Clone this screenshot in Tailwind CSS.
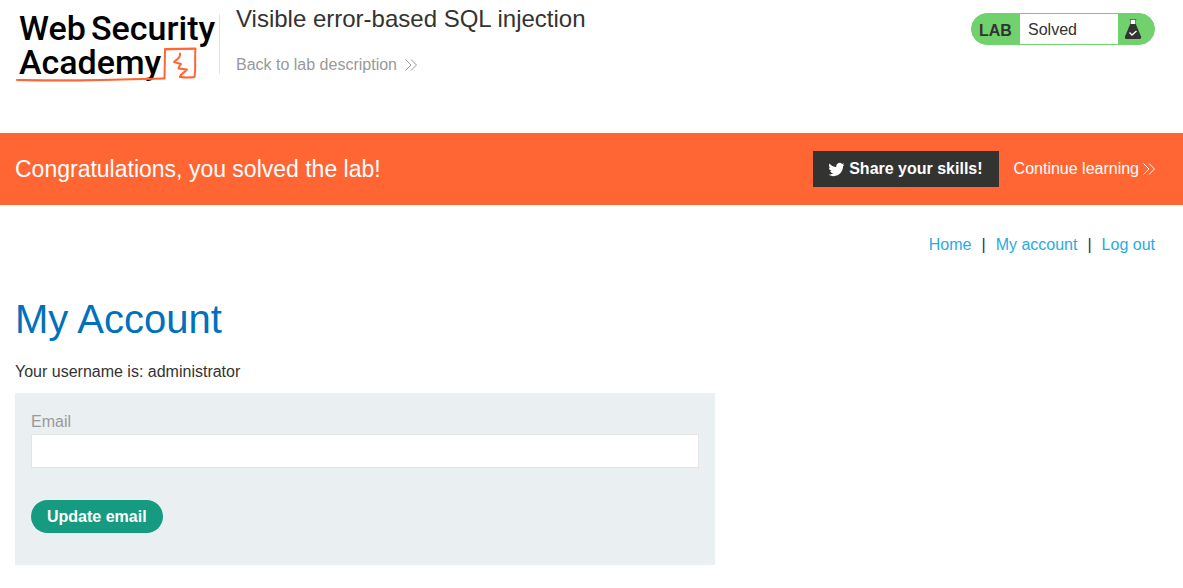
<!DOCTYPE html>
<html lang="en">
<head>
<meta charset="utf-8">
<meta name="viewport" content="width=device-width, initial-scale=1">
<title>Visible error-based SQL injection</title>
<script src="https://cdn.jsdelivr.net/npm/@tailwindcss/browser@4"></script>
</head>
<body class="bg-white font-['Liberation_Sans',Arial,sans-serif] text-base leading-6 text-[#333332]">
<header class="flex h-[133px] items-start pr-7 pl-4">
  <a href="#" aria-label="Web Security Academy" class="shrink-0 pt-3">
    <svg class="block h-[72px] w-[200px] overflow-visible" viewBox="16 12 200 72" font-family="Roboto, sans-serif" font-weight="500" font-size="34">
      <text x="19" y="40">Web</text>
      <text x="91" y="40">Security</text>
      <text x="19" y="74">Academy</text>
      <g fill="none" stroke="#ff6633" stroke-linecap="round" stroke-linejoin="round">
        <path stroke-width="2" d="M17 80Q60 81 100 80L164.500 78.500L165 49L195.500 48.500C194.500 58 196 68 194.500 77Q188 78 180 77"/>
        <path stroke-width="1" d="M17 79.500Q70 81 146 79L164 78M166 50L195 49"/>
        <path stroke-width="2" d="M180 53.500C180.500 57 178.500 58.500 174 62L181 64C179 66 179 67 178.500 68.500L187 69.500C185 72 182 73 180 76.500"/>
      </g>
    </svg>
  </a>
  <div class="mt-3.5 ml-[3px] h-15 w-px shrink-0 bg-[#e4e4e4]"></div>
  <div class="ml-4 grow pt-1">
    <h1 class="text-2xl leading-[30px]">Visible error-based SQL injection</h1>
    <a href="#" class="mt-[19px] inline-flex items-center gap-2 text-[#999999]">Back to lab description
      <svg class="h-3 w-3" viewBox="0 0 12 12" fill="none" stroke="currentColor" stroke-width="1"><path d="M.5 .5L6 6L.5 11.500M6 .5L11.500 6L6 11.500"/></svg>
    </a>
  </div>
  <div class="mt-[13px] flex h-8 w-[184px] shrink-0 overflow-hidden rounded-2xl border border-[#70d16d] bg-[#70d16d]">
    <span class="w-12 pt-[5px] pl-[7px] font-bold">LAB</span>
    <span class="grow bg-white pt-1 pl-2">Solved</span>
    <span class="flex w-9 items-start pt-1 pl-[6px]">
      <svg class="h-[22px] w-[18px]" viewBox="0 0 18 22">
        <path fill="#fff" d="M6.500 2H11.500V8H6.500z"/>
        <path fill="none" stroke="#333332" d="M5.500 1.500H12.500M6.500 1.500V7.500M11.500 1.500V7.500" stroke-width=".5"/>
        <path fill="#333332" d="M6.200 6H11.800L17 18.500Q17.500 21 15.500 21H2.500Q.5 21 1 18.500z"/>
        <path fill="none" stroke="#fff" stroke-width="1.300" d="M5.500 14.500L8 17L12.500 13"/>
      </svg>
    </span>
  </div>
</header>
<section class="flex h-18 items-center bg-[#ff6633] pr-7 pl-[15px] text-white">
  <h2 class="grow text-[23px] leading-8">Congratulations, you solved the lab!</h2>
  <button type="button" class="flex h-9 items-center gap-[5px] bg-[#333332] px-4 font-bold">
    <svg class="h-[15px] w-[15px]" viewBox="1 2 22 20" fill="currentColor"><path d="M23.953 4.570a10 10 0 0 1-2.825.775 4.958 4.958 0 0 0 2.163-2.723c-.951.555-2.005.959-3.127 1.184a4.920 4.920 0 0 0-8.384 4.482C7.690 8.095 4.067 6.130 1.640 3.162a4.822 4.822 0 0 0-.666 2.475c0 1.710.870 3.213 2.188 4.096a4.904 4.904 0 0 1-2.228-.616v.060a4.923 4.923 0 0 0 3.946 4.827 4.996 4.996 0 0 1-2.212.085 4.936 4.936 0 0 0 4.604 3.417 9.867 9.867 0 0 1-6.102 2.105c-.390 0-.779-.023-1.170-.067a13.995 13.995 0 0 0 7.557 2.209c9.053 0 13.998-7.496 13.998-13.985 0-.210 0-.420-.015-.630a9.935 9.935 0 0 0 2.460-2.548z"/></svg>
    Share your skills!
  </button>
  <a href="#" class="ml-[15px] flex items-center gap-1">Continue learning
    <svg class="h-3 w-3" viewBox="0 0 12 12" fill="none" stroke="currentColor" stroke-width="1"><path d="M.5 .5L6 6L.5 11.500M6 .5L11.500 6L6 11.500"/></svg>
  </a>
</section>
<nav class="flex justify-end gap-2.5 pt-7 pr-7">
  <a href="#" class="text-[#29abe2]">Home</a><span>|</span>
  <a href="#" class="text-[#29abe2]">My account</a><span>|</span>
  <a href="#" class="text-[#29abe2]">Log out</a>
</nav>
<main class="px-[15px] pt-[38px]">
  <h1 class="text-[40px] leading-12 text-[#0071bc]">My Account</h1>
  <p class="mt-[17px]">Your username is: administrator</p>
  <form class="mt-[9px] max-w-[700px] bg-[#eaeff2] px-4 pt-[17px] pb-8">
    <label for="email" class="block text-[#999999]">Email</label>
    <input id="email" type="email" class="block h-[34px] w-full border border-[#e4e4e4] bg-white px-2">
    <button type="button" class="mt-8 block h-[33px] rounded-full bg-[#169b80] px-4 font-bold text-white">Update email</button>
  </form>
</main>
</body>
</html>
